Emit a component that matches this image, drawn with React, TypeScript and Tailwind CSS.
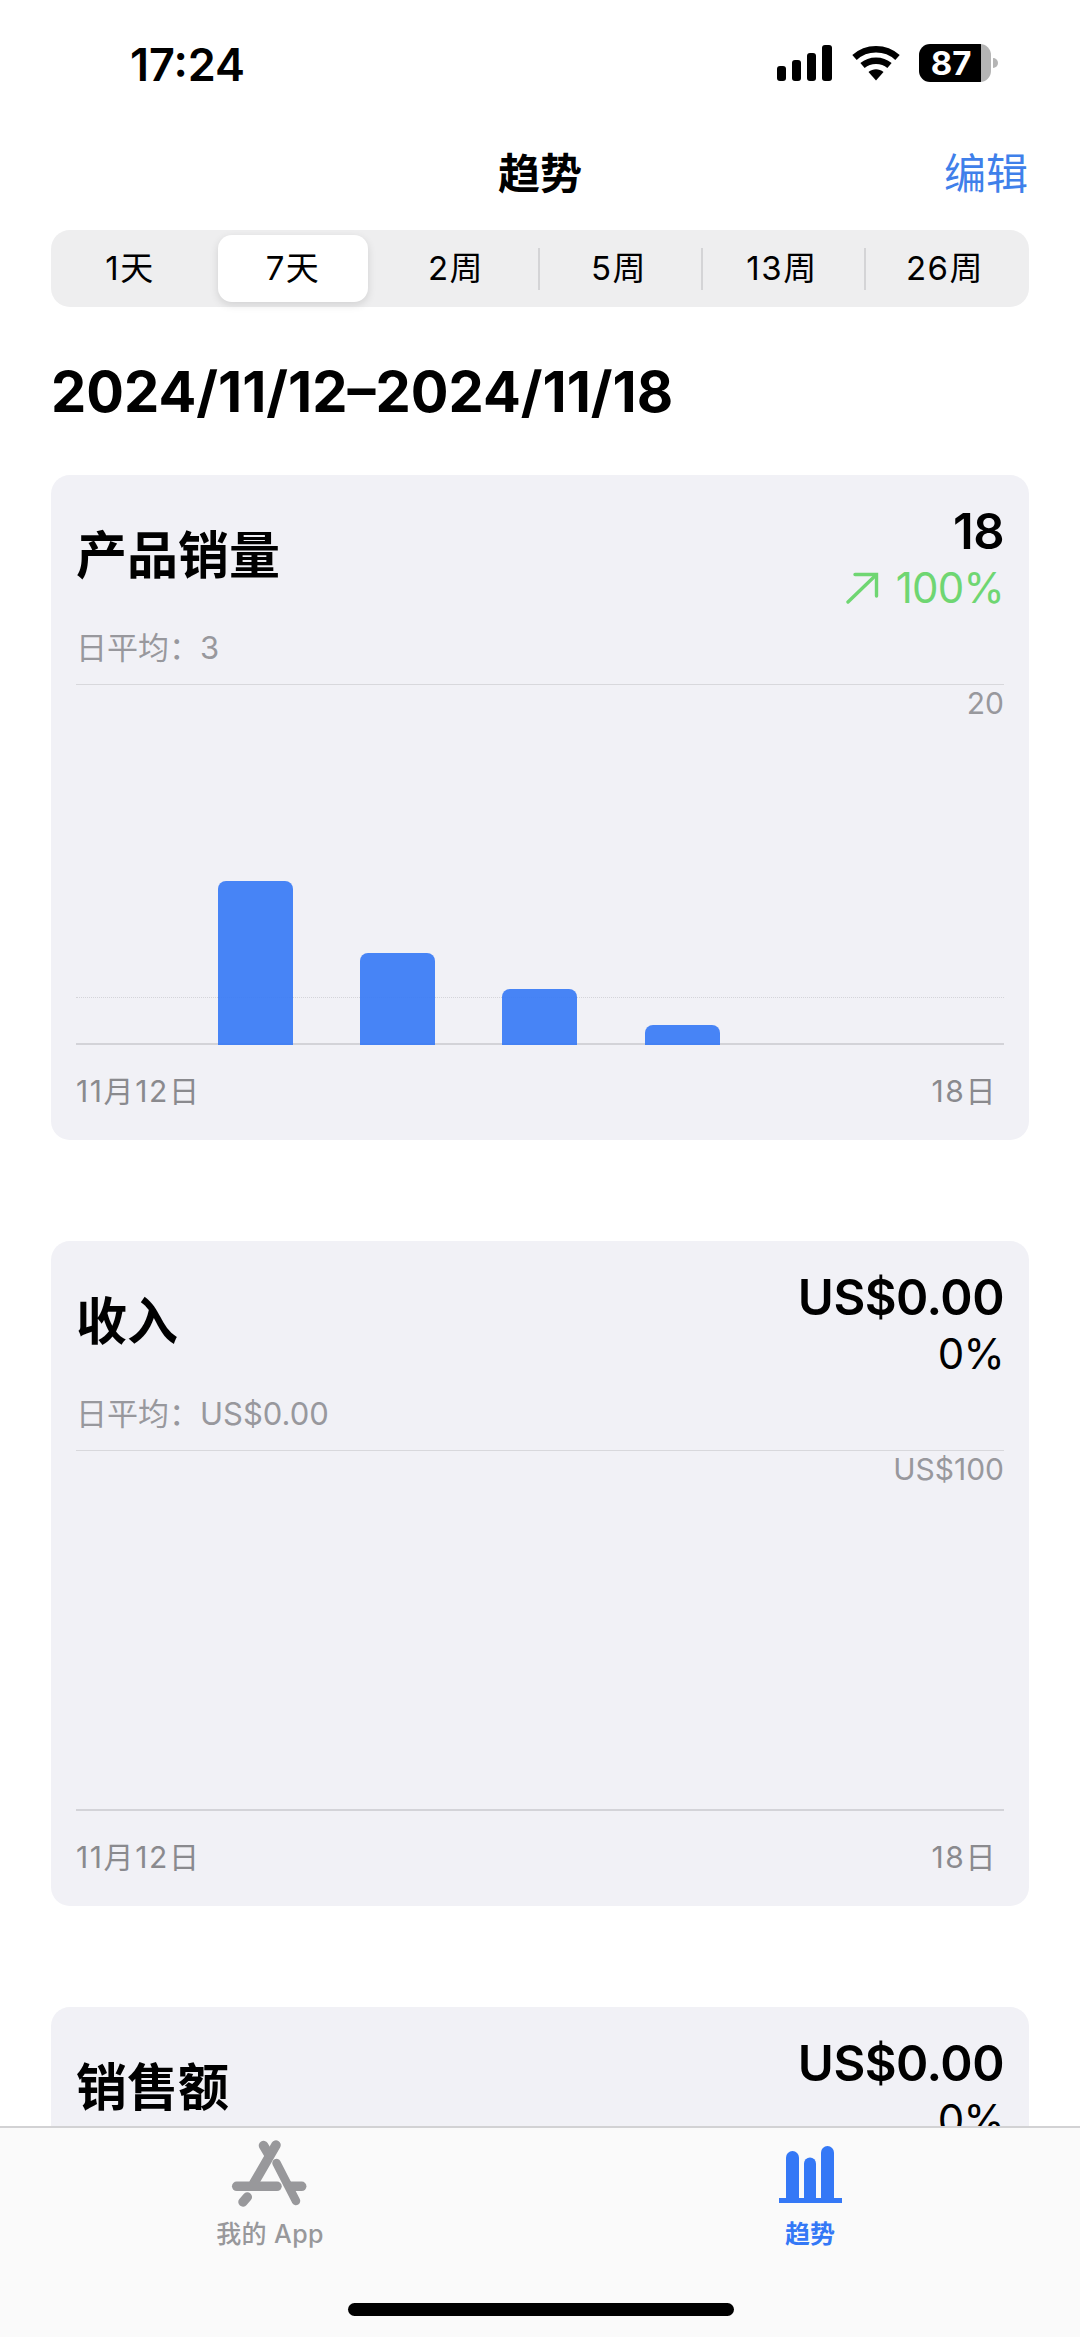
const cjk = "font-['Inter','Noto_Sans_CJK_SC',sans-serif]";

const segments = ["1天", "7天", "2周", "5周", "13周", "26周"];

function Signal() {
  return (
    <svg width="56" height="36" viewBox="0 0 56 36" fill="black">
      <rect x="0" y="21" width="9" height="15" rx="3" />
      <rect x="15" y="15" width="9" height="21" rx="3" />
      <rect x="30" y="8" width="9" height="28" rx="3" />
      <rect x="45" y="0" width="10" height="36" rx="3" />
    </svg>
  );
}

function Wifi() {
  return (
    <svg width="48" height="36" viewBox="0 0 48 36" fill="none" stroke="black" strokeWidth="6.5">
      <path d="M2.5 12.5C14.5 1.5 33.5 1.5 45.5 12.5" />
      <path d="M10.5 20.5C18 14 30 14 37.5 20.5" />
      <path d="M16.5 27L24 35.5L31.5 27C27 23.2 21 23.2 16.5 27Z" fill="black" stroke="none" />
    </svg>
  );
}

function Battery() {
  return (
    <div className="flex items-center gap-[2px]">
      <div className="flex h-[38px] w-[72px] overflow-hidden rounded-[11px]">
        <div className="flex w-[62px] items-center justify-center bg-black pl-[2px] text-[33px] leading-[30px] font-bold text-white">87</div>
        <div className="w-[10px] bg-[#b5b5b5]" />
      </div>
      <div className="h-[10px] w-[5px] rounded-r-[5px] bg-[#b5b5b5]" />
    </div>
  );
}

function TrendUp() {
  return (
    <svg width="33" height="32" viewBox="0 0 33 32" fill="none" stroke="#6fd672" strokeWidth="3.4" strokeLinecap="round">
      <path d="M2 30L30 3" />
      <path d="M9 2.5H30.5V24" />
    </svg>
  );
}

function AppStoreIcon() {
  return (
    <svg width="80" height="70" viewBox="0 0 80 70" fill="none" stroke="#98989b" strokeWidth="9.5" strokeLinecap="round">
      <path d="M46 6L24 44" />
      <path d="M33.5 6.5L38.5 15" />
      <path d="M46.5 24L66 62" strokeWidth="8.5" />
      <path d="M6.7 47.3H47" />
      <path d="M60 47.3H71.7" />
      <path d="M17.3 58L13 63" />
    </svg>
  );
}

function TrendsIcon() {
  return (
    <svg width="63" height="57" viewBox="0 0 63 57" fill="#3478f6">
      <path d="M7 54V11.5a6.5 6.5 0 0 1 13 0V54Z" />
      <path d="M25 54V17.5a6 6 0 0 1 12 0V54Z" />
      <path d="M42 54V6.5a6.5 6.5 0 0 1 13 0V54Z" />
      <rect x="0" y="52" width="63" height="5" />
    </svg>
  );
}

type CardProps = {
  title: string;
  value: string;
  change: string;
  average?: string;
  top?: string;
  bars?: number[];
  up?: boolean;
};

function Card({ title, value, change, average, top, bars, up }: CardProps) {
  return (
    <section className="rounded-[19px] bg-[#f1f1f6] px-[25px] pt-[30px]">
      <div className="flex h-[110px] items-center justify-between">
        <h2 className="mb-[10px] text-[51px] leading-none font-bold text-black">{title}</h2>
        <div className="flex flex-col items-end">
          <div className="h-[55px] text-[49px] leading-[55px] font-semibold tracking-[-0.5px] text-black">{value}</div>
          <div className={`flex h-[57px] items-center gap-[17px] text-[42px] leading-[57px] tracking-[-0.75px] ${up ? "text-[#6fd672]" : "text-black"}`}>
            {up && <TrendUp />}
            <span>{change}</span>
          </div>
        </div>
      </div>
      {/* third card sits under the tab bar, only its header shows */}
      {top && (
        <>
          <div className="h-[69px] pt-[16px] text-[31px] leading-[34px] text-[#98989d]">{average}</div>
          <div className="relative h-[361px] border-t border-b-2 border-t-[#d8d8dc] border-b-[#d3d3d8]">
            <div className="absolute top-0 right-0 text-[30px] leading-[36px] text-[#98989d]">{top}</div>
            {bars && <div className="absolute top-[312px] right-0 left-0 border-t border-dotted border-[#d4d4d9]" />}
            {bars && (
              <div className="absolute right-0 -bottom-[2px] left-0 flex items-end justify-between">
                {bars.map((n, i) => (
                  <div
                    key={i}
                    className="w-[75px] rounded-t-[8px] bg-[#3478f6]/90"
                    style={{ height: n > 0 ? n * 18 + 2 : 0 }}
                  />
                ))}
              </div>
            )}
          </div>
          <div className="flex h-[95px] justify-between pt-[28px] text-[30px] leading-[36px] tracking-[1.6px] text-[#8a8a8e]">
            <span>11月12日</span>
            <span className="pr-[7px]">18日</span>
          </div>
        </>
      )}
    </section>
  );
}

export default function App() {
  return (
    <div className={`relative h-[2337px] w-[1080px] overflow-hidden bg-white text-black ${cjk}`}>
      <div className="flex h-[150px] items-start justify-between pt-[44px] pr-[82px] pl-[130px]">
        <div className="text-[45px] leading-[42px] font-semibold">17:24</div>
        <div className="flex items-center gap-[19px]">
          <Signal />
          <Wifi />
          <Battery />
        </div>
      </div>

      <div className="relative flex h-[48px] items-center justify-center px-[51px]">
        <h1 className="text-[42px] leading-none font-bold">趋势</h1>
        <span className="absolute right-[52px] text-[42px] leading-none text-[#3f80ea]">编辑</span>
      </div>

      <div className="mx-[51px] mt-[32px] grid h-[77px] grid-cols-6 rounded-[19px] bg-[#eeeeef]">
        {segments.map((s, i) => (
          <div key={s} className="relative flex items-center justify-center pr-[5px] text-[33px] tracking-[1.5px]">
            {i === 1 && (
              <div className="absolute top-[5px] bottom-[5px] left-[4px] w-[150px] rounded-[14px] bg-white shadow-[0_3px_8px_rgba(0,0,0,0.12)]" />
            )}
            <span className="relative">{s}</span>
            {i >= 2 && i < 5 && (
              <div className="absolute top-[18px] right-0 h-[42px] w-[2px] bg-[#d4d4d6]" />
            )}
          </div>
        ))}
      </div>

      <h2 className="mt-[55px] ml-[51px] text-[56px] leading-[60px] font-bold">2024/11/12–2024/11/18</h2>

      <div className="mx-[51px] mt-[53px] flex flex-col gap-[101px]">
        <Card title="产品销量" value="18" change="100%" average="日平均：3" top="20" bars={[0, 9, 5, 3, 1, 0, 0]} up />
        <Card title="收入" value="US$0.00" change="0%" average="日平均：US$0.00" top="US$100" />
        <Card title="销售额" value="US$0.00" change="0%" />
      </div>

      <nav className="absolute right-0 bottom-0 left-0 h-[211px] border-t-2 border-[#d2d2d4] bg-[#fafafa]">
        <div className="grid grid-cols-2 pt-[3px]">
          <div className="flex flex-col items-center">
            <div className="flex h-[78px] items-end">
              <AppStoreIcon />
            </div>
            <span className="mt-[11px] text-[25px] leading-[28px] font-medium tracking-[0.4px] text-[#98989b]">我的 App</span>
          </div>
          <div className="flex flex-col items-center">
            <div className="flex h-[78px] items-end pb-[6px]">
              <TrendsIcon />
            </div>
            <span className="mt-[11px] text-[25px] leading-[28px] font-semibold text-[#3478f6]">趋势</span>
          </div>
        </div>
        <div className="absolute bottom-[21px] left-[348px] h-[13px] w-[386px] rounded-full bg-black" />
      </nav>
    </div>
  );
}
